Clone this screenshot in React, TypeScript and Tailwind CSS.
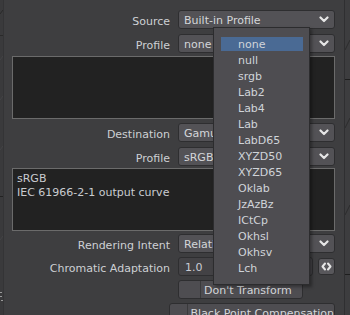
import React from "react";

const font = { fontFamily: '"DejaVu Sans", Verdana, sans-serif' };

function Chevron() {
  return (
    <svg width="10" height="7" viewBox="0 0 10 7" className="shrink-0">
      <path d="M1.5 1.5 L5 5 L8.5 1.5" fill="none" stroke="#e6e6e6" strokeWidth="2.2" strokeLinecap="round" strokeLinejoin="round" />
    </svg>
  );
}

function Dropdown({ text }: { text: string }) {
  return (
    <div className="flex h-[19px] w-[157px] items-center justify-between rounded-[3px] border border-[#2e2e30] bg-[#535256] pl-[5px] pr-[5px] text-[11px] text-[#d4d6d9]">
      <span className="whitespace-nowrap pt-[1px] leading-none">{text}</span>
      <Chevron />
    </div>
  );
}

function Row({ label, children, className }: { label: string; children: React.ReactNode; className?: string }) {
  return (
    <div className={"flex h-[19px] shrink-0 items-center " + (className ?? "")}>
      <div className="w-[158px] pt-[3px] text-right text-[11px] leading-none text-[#cdd0d4]">{label}</div>
      <div className="ml-[8px] flex items-center">{children}</div>
    </div>
  );
}

const items = ["none", "null", "srgb", "Lab2", "Lab4", "Lab", "LabD65", "XYZD50", "XYZD65", "Oklab", "JzAzBz", "ICtCp", "Okhsl", "Okhsv", "Lch"];

export default function App() {
  return (
    <div className="relative flex h-[315px] w-[350px] overflow-hidden bg-[#3e3e40]" style={font}>
      {/* left strip */}
      <div className="relative h-full w-[4px] shrink-0 border-r border-[#343436] bg-[#3a3a3c]">
        <svg width="3" height="315" className="absolute left-0 top-0">
          <path d="M0 14 L3 10" stroke="#2a2a2a" strokeWidth="1" />
          <line x1="0" y1="35.5" x2="3" y2="35.5" stroke="#2a2a2a" />
          <line x1="0" y1="196.5" x2="3" y2="196.5" stroke="#222" />
          <path d="M0 60 L3 56 M0 100 L3 96 M0 150 L3 146 M0 240 L3 236" stroke="#444446" />
          <rect x="0" y="292" width="2" height="1" fill="#9a9a9a" />
          <rect x="0" y="296" width="2" height="1" fill="#9a9a9a" />
          <rect x="1" y="300" width="2" height="1" fill="#9a9a9a" />
        </svg>
      </div>

      {/* main */}
      <div className="flex w-[340px] shrink-0 flex-col overflow-hidden pl-[8px] pr-[9px] pt-[10px]">
        <Row label="Source">
          <Dropdown text="Built-in Profile" />
        </Row>
        <Row label="Profile" className="mt-[5px]">
          <Dropdown text="none" />
        </Row>
        <div className="mt-[3px] h-[63px] w-[323px] shrink-0 border border-[#6b6b6b] bg-[#222222]" />
        <Row label="Destination" className="mt-[4px]">
          <Dropdown text="Gamut Clipping" />
        </Row>
        <Row label="Profile" className="mt-[5px]">
          <Dropdown text="sRGB" />
        </Row>
        <div className="mt-[2px] h-[63px] w-[323px] shrink-0 border border-[#6b6b6b] bg-[#222222] px-[4px] pt-[3px] text-[11px] leading-[14px] text-[#c9ccd0]">
          <div>sRGB</div>
          <div>IEC 61966-2-1 output curve</div>
        </div>
        <Row label="Rendering Intent" className="mt-[3px]">
          <Dropdown text="Relative Colorimetric" />
        </Row>
        <Row label="Chromatic Adaptation" className="mt-[4px]">
          <div className="flex h-[19px] w-[135px] items-center rounded-[3px] border border-[#2e2e30] bg-[#434245] pl-[6px] text-[11px] text-[#c9ccd4]">
            <span className="pt-[1px] leading-none">1.0</span>
          </div>
          <div className="ml-[5px] flex h-[17px] w-[17px] items-center justify-center rounded-[3px] border border-[#2e2e30] bg-[#58575b]">
            <svg width="11" height="9" viewBox="0 0 11 9">
              <path d="M4 1.5 L1.5 4.5 L4 7.5 M7 1.5 L9.5 4.5 L7 7.5" fill="none" stroke="#e6e6e6" strokeWidth="2" strokeLinecap="round" strokeLinejoin="round" />
            </svg>
          </div>
        </Row>
        <Row label="" className="mt-[4px]">
          <div className="flex h-[19px] w-[125px] items-center rounded-[3px] border border-[#2e2e30] bg-[#4e4d51] text-[11px] text-[#d4d6d9]">
            <div className="h-full w-[22px] border-r border-[#3a3a3c]" />
            <span className="whitespace-nowrap pl-[3px] pt-[1px] leading-none">Don't Transform</span>
          </div>
        </Row>
        <Row label="" className="mt-[4px]">
          <div className="flex h-[19px] w-[166px] items-center rounded-[3px] border border-[#2e2e30] bg-[#4e4d51] text-[11px] text-[#d4d6d9]">
            <div className="h-full w-[22px] border-r border-[#3a3a3c]" />
            <span className="whitespace-nowrap pl-[3px] pt-[1px] leading-none">Black Point Compensation</span>
          </div>
        </Row>
      </div>

      {/* right strip */}
      <div className="relative h-full w-[6px] shrink-0 border-l border-[#2f2f31] bg-[#3d3d3f]">
        <svg width="5" height="315" className="absolute left-0 top-0">
          <path d="M0 50 L5 40 M0 128 L5 118 M0 215 L5 205" stroke="#2c2c2e" />
          <line x1="0" y1="79.5" x2="5" y2="79.5" stroke="#1e1e1e" />
          <line x1="0" y1="274.5" x2="5" y2="274.5" stroke="#1e1e1e" />
        </svg>
      </div>

      {/* popup menu */}
      <div className="absolute left-[213px] top-[27px] w-[97px] border border-[#2c2c2e] bg-[#4e4d51] pb-[8px] pl-[7px] pr-[6px] pt-[8px] shadow-[2px_2px_3px_rgba(0,0,0,0.35)]">
        {items.map((it, i) => (
          <div key={it} className="flex h-[16px] items-center">
            <div className={"flex h-[14px] w-full items-center pl-[17px] text-[11px] text-[#d0d4d9] " + (i === 0 ? "bg-[#4a6a94]" : "")}>
              <span className="pt-[1px] leading-none">{it}</span>
            </div>
          </div>
        ))}
      </div>
    </div>
  );
}
